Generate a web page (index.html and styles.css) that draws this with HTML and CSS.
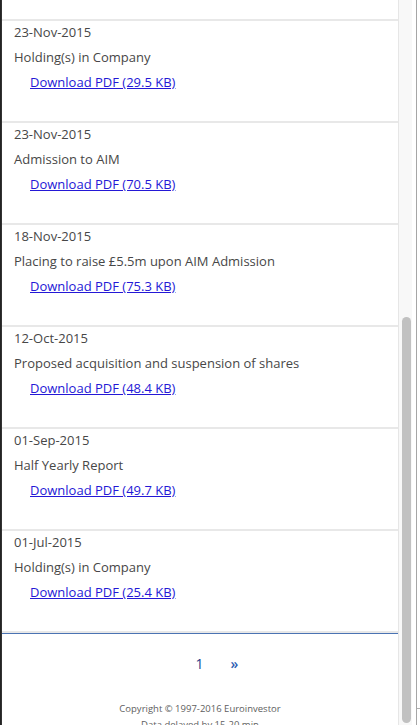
FILE: index.html
```html
<!DOCTYPE html>
<html lang="en">
<head>
<meta charset="utf-8">
<title>Company announcements</title>
<link rel="stylesheet" href="styles.css">
</head>
<body>
<div class="frame">
  <div class="edge"></div>
  <main class="page">
    <div class="spacer"></div>
    <ul class="news">
      <li class="item">
        <div class="date">23-Nov-2015</div>
        <div class="title">Holding(s) in Company</div>
        <div class="dl"><a href="#">Download PDF (29.5 KB)</a></div>
      </li>
      <li class="item">
        <div class="date">23-Nov-2015</div>
        <div class="title">Admission to AIM</div>
        <div class="dl"><a href="#">Download PDF (70.5 KB)</a></div>
      </li>
      <li class="item">
        <div class="date">18-Nov-2015</div>
        <div class="title">Placing to raise £5.5m upon AIM Admission</div>
        <div class="dl"><a href="#">Download PDF (75.3 KB)</a></div>
      </li>
      <li class="item">
        <div class="date">12-Oct-2015</div>
        <div class="title">Proposed acquisition and suspension of shares</div>
        <div class="dl"><a href="#">Download PDF (48.4 KB)</a></div>
      </li>
      <li class="item">
        <div class="date">01-Sep-2015</div>
        <div class="title">Half Yearly Report</div>
        <div class="dl"><a href="#">Download PDF (49.7 KB)</a></div>
      </li>
      <li class="item">
        <div class="date">01-Jul-2015</div>
        <div class="title">Holding(s) in Company</div>
        <div class="dl"><a href="#">Download PDF (25.4 KB)</a></div>
      </li>
    </ul>
    <footer class="foot">
      <nav class="pager">
        <span class="cur">1</span>
        <a class="next" href="#">»</a>
      </nav>
      <p class="copy">Copyright © 1997-2016 Euroinvestor</p>
      <p class="copy">Data delayed by 15-20 min</p>
    </footer>
  </main>
  <div class="scrollbar"><div class="thumb"></div></div>
  <div class="gap"></div>
  <div class="rule"><div class="tick"></div></div>
  <div class="tail"></div>
</div>
</body>
</html>
```
FILE: styles.css
```css
html, body {
  margin: 0;
  padding: 0;
  background: #fff;
}
body {
  font-family: "Open Sans", "Noto Sans", sans-serif;
  font-size: 13px;
  color: #474747;
}
.frame {
  display: flex;
  width: 420px;
  height: 725px;
  overflow: hidden;
}
.edge {
  width: 2px;
  flex: none;
  background: linear-gradient(to right, #1c1c1c, #3a3a3a);
}
.page {
  width: 396px;
  flex: none;
  background: #fff;
}
.spacer {
  height: 19px;
}
.news {
  list-style: none;
  margin: 0;
  padding: 0;
}
.item {
  border-top: 2px solid #e8e8e8;
  padding: 0 0 28px 12px;
  height: 72px;
}
.date {
  line-height: 22px;
}
.title {
  line-height: 28px;
}
.dl {
  line-height: 22px;
  padding-left: 16px;
}
.dl a {
  color: #2418d6;
  text-decoration: underline;
}
.foot {
  border-top: 2px solid #e8e8e8;
  box-shadow: inset 0 1px 0 #4a73b3;
  padding-top: 1px;
}
.pager {
  display: flex;
  justify-content: center;
  gap: 27px;
  padding: 19px 0 0 34px;
  line-height: 22px;
  font-size: 14px;
}
.cur {
  color: #1d3d8c;
}
.next {
  color: #2c5cb2;
  text-decoration: none;
  font-size: 14px;
  font-weight: 600;
}
.copy {
  margin: 0;
  text-align: center;
  font-size: 9.5px;
  line-height: 16px;
  color: #606060;
}
.pager + .copy {
  margin-top: 26px;
}
.scrollbar {
  width: 14px;
  flex: none;
  box-sizing: border-box;
  background: #f8f8f8;
  border-left: 1px solid #e6e6e6;
  padding: 317px 2px 0 3px;
}
.thumb {
  width: 9px;
  height: 406px;
  border-radius: 5px;
  background: #c1c1c1;
}
.gap {
  width: 4px;
  flex: none;
}
.rule {
  width: 1px;
  flex: none;
  background: #a6a6a6;
  position: relative;
}
.tick {
  position: absolute;
  left: 1px;
  top: 708px;
  width: 3px;
  height: 1px;
  background: #b0b0b0;
}
.tail {
  flex: 1;
}
```
